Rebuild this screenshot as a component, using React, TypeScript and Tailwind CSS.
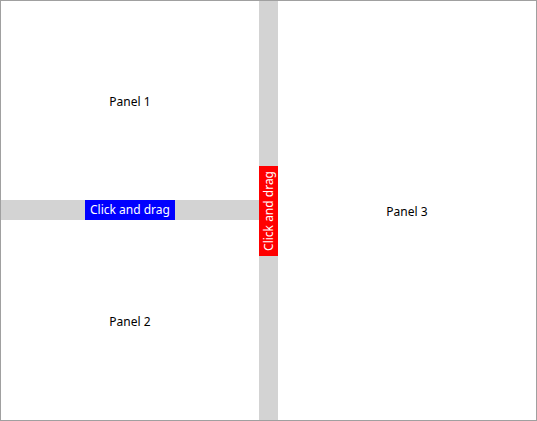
export default function App() {
  return (
    <div
      className="flex h-[421px] w-[537px] border border-[#a0a0a0] bg-white text-[12px] text-black"
      style={{ fontFamily: '"Noto Sans", "Open Sans", sans-serif' }}
    >
      {/* left column */}
      <div className="flex w-[258px] flex-col">
        <div className="flex h-[199px] items-center justify-center pt-[2px]">Panel 1</div>
        <div className="flex h-[20px] items-center justify-center bg-[#d3d3d3]">
          <div className="flex h-[20px] w-[90px] items-center justify-center bg-[#0000ff] text-white">
            Click and drag
          </div>
        </div>
        <div className="flex flex-1 items-center justify-center pt-[3px]">Panel 2</div>
      </div>
      {/* vertical splitter */}
      <div className="flex w-[19px] items-center justify-center bg-[#d3d3d3]">
        <div className="flex h-[90px] w-[19px] items-center justify-center bg-[#ff0000] text-white">
          <span className="rotate-180 [writing-mode:vertical-rl]">Click and drag</span>
        </div>
      </div>
      <div className="flex flex-1 items-center justify-center pt-[2px]">Panel 3</div>
    </div>
  )
}
